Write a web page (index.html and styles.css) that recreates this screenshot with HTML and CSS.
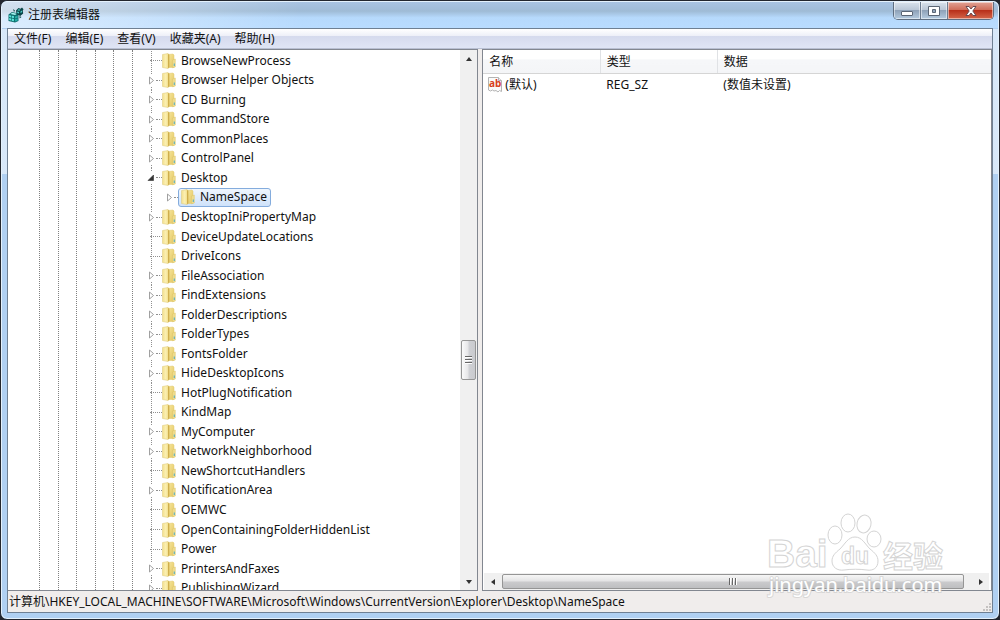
FILE: index.html
```html
<!DOCTYPE html>
<html lang="zh-CN">
<head>
    <meta charset="UTF-8">
    <meta name="viewport" content="width=device-width, initial-scale=1.0">
    <title>注册表编辑器</title>
    <link rel="stylesheet" href="styles.css">
</head>
<body>
    <svg class="symbols" aria-hidden="true">
        <defs>
            <linearGradient id="gold" x1="0" x2="1" y1="0" y2="0">
                <stop offset="0" stop-color="#f3df8c"/>
                <stop offset="0.5" stop-color="#fbf0b4"/>
                <stop offset="1" stop-color="#efd87c"/>
            </linearGradient>
            <linearGradient id="goldDark" x1="0" x2="1" y1="0" y2="1">
                <stop offset="0" stop-color="#f7e79c"/>
                <stop offset="1" stop-color="#e3c662"/>
            </linearGradient>
        </defs>
        <symbol id="folder" viewBox="0 0 14 16">
            <path d="M6 1.500 11 1l1 1v12.500H6z" fill="url(#goldDark)" stroke="#e0c970" stroke-width=".5"/>
            <path d="M.5 1.500 6 .5l1 1v13l-1 1-5.500-1z" fill="url(#gold)" stroke="#dcc878" stroke-width=".5"/>
            <path d="M6 .8 7.300 2v12.300L6 15.500z" fill="#cfae4c"/>
            <path d="M10.500 7 13.300 6v8l-2.800.8z" fill="#efdc8c" stroke="#dcc468" stroke-width=".5"/>
            <path d="M11.700 10.500h1.300v2.500h-1.300z" fill="#6fb5b8"/>
        </symbol>
        <symbol id="closed" viewBox="0 0 9 9">
            <path d="M2.500 1v7L6.500 4.500z" fill="#fff" stroke="#a0a0a0"/>
        </symbol>
        <symbol id="opened" viewBox="0 0 9 9">
            <path d="M6.500 2v5.500H1z" fill="#333" stroke="#333" stroke-width=".6"/>
        </symbol>
    </svg>

    <div class="window">
        <header class="titlebar">
            <svg class="app-icon" viewBox="0 0 16 16" aria-hidden="true">
                <path d="M.5 7.500 4 5l6.500 1.500V14L7 15.500.5 14z" fill="#0d6e6e"/>
                <path d="M1.200 8.200 3 8.500v2l-1.800-.4zM3.700 8.700l2.200.4v2L3.700 10.700zM1.200 11l1.800.4v2L1.200 13zM3.700 11.500l2.200.4v2.300l-2.200-.5z" fill="#5fe6dc"/>
                <path d="M7 9.500 9.700 8.800v2L7 11.500zM7 12.300l2.700-.8v2L7 14.500z" fill="#25aaa4"/>
                <path d="M2.500 7 4.200 5.700 9 6.700 7 8z" fill="#a8f5ef"/>
                <path d="M8 3.500 10.500 1l2 .8L14 .5l1.500 1.700-.8 1.600.5 2.700-3 2.500L8.500 7z" fill="#0b4548"/>
                <path d="M10.500 2.300l2 .5-1.200 1L9.500 3.400zM9.200 4.500l1.800.4V6.500L9.200 6zM12.500 4.500l1.500-.9v1.600L12.500 6z" fill="#4fcfc8"/>
                <path d="m5 2 2 1.500L6 5zM11.500 9l2 1-2 1.500z" fill="#104848"/>
            </svg>
            <h1 class="title">注册表编辑器</h1>
            <div class="controls">
                <button class="control" type="button" aria-label="最小化">
                    <svg viewBox="0 0 14 12"><rect x="1.500" y="6.500" width="11" height="4" rx=".5" fill="#fff" stroke="#5b6675"/></svg>
                </button>
                <button class="control" type="button" aria-label="最大化">
                    <svg viewBox="0 0 14 12"><path d="M1.500 1.500h11v9h-11zM5.500 4.500v3h3v-3z" fill="#fff" fill-rule="evenodd" stroke="#5b6675"/></svg>
                </button>
                <button class="control close" type="button" aria-label="关闭">
                    <svg viewBox="0 0 14 12"><path d="M2 1.500h3l2 2.500 2-2.500h3L8.800 6l3.200 4.500H9L7 8l-2 2.500H2L5.200 6z" fill="#fff" stroke="#6b4a50"/></svg>
                </button>
            </div>
        </header>

        <div class="client">
            <nav class="menubar">
                <button type="button">文件(F)</button>
                <button type="button">编辑(E)</button>
                <button type="button">查看(V)</button>
                <button type="button">收藏夹(A)</button>
                <button type="button">帮助(H)</button>
            </nav>

            <main class="panes">
                <section class="pane tree-pane">
                    <div class="guides"><i></i><i></i><i></i><i></i><i></i><i></i></div>
                    <ul class="tree">
                        <li class="node"><i class="stub"></i><svg class="folder"><use href="#folder"/></svg><span class="label">BrowseNewProcess</span></li>
                        <li class="node"><button class="twist" type="button" aria-label="展开"><svg><use href="#closed"/></svg></button><svg class="folder"><use href="#folder"/></svg><span class="label">Browser Helper Objects</span></li>
                        <li class="node"><button class="twist" type="button" aria-label="展开"><svg><use href="#closed"/></svg></button><svg class="folder"><use href="#folder"/></svg><span class="label">CD Burning</span></li>
                        <li class="node"><button class="twist" type="button" aria-label="展开"><svg><use href="#closed"/></svg></button><svg class="folder"><use href="#folder"/></svg><span class="label">CommandStore</span></li>
                        <li class="node"><button class="twist" type="button" aria-label="展开"><svg><use href="#closed"/></svg></button><svg class="folder"><use href="#folder"/></svg><span class="label">CommonPlaces</span></li>
                        <li class="node"><button class="twist" type="button" aria-label="展开"><svg><use href="#closed"/></svg></button><svg class="folder"><use href="#folder"/></svg><span class="label">ControlPanel</span></li>
                        <li class="node"><button class="twist" type="button" aria-label="折叠"><svg><use href="#opened"/></svg></button><svg class="folder"><use href="#folder"/></svg><span class="label">Desktop</span></li>
                        <li class="node child"><button class="twist" type="button" aria-label="展开"><svg><use href="#closed"/></svg></button><span class="selected"><svg class="folder"><use href="#folder"/></svg><span class="label">NameSpace</span></span></li>
                        <li class="node"><button class="twist" type="button" aria-label="展开"><svg><use href="#closed"/></svg></button><svg class="folder"><use href="#folder"/></svg><span class="label">DesktopIniPropertyMap</span></li>
                        <li class="node"><i class="stub"></i><svg class="folder"><use href="#folder"/></svg><span class="label">DeviceUpdateLocations</span></li>
                        <li class="node"><i class="stub"></i><svg class="folder"><use href="#folder"/></svg><span class="label">DriveIcons</span></li>
                        <li class="node"><button class="twist" type="button" aria-label="展开"><svg><use href="#closed"/></svg></button><svg class="folder"><use href="#folder"/></svg><span class="label">FileAssociation</span></li>
                        <li class="node"><button class="twist" type="button" aria-label="展开"><svg><use href="#closed"/></svg></button><svg class="folder"><use href="#folder"/></svg><span class="label">FindExtensions</span></li>
                        <li class="node"><button class="twist" type="button" aria-label="展开"><svg><use href="#closed"/></svg></button><svg class="folder"><use href="#folder"/></svg><span class="label">FolderDescriptions</span></li>
                        <li class="node"><button class="twist" type="button" aria-label="展开"><svg><use href="#closed"/></svg></button><svg class="folder"><use href="#folder"/></svg><span class="label">FolderTypes</span></li>
                        <li class="node"><button class="twist" type="button" aria-label="展开"><svg><use href="#closed"/></svg></button><svg class="folder"><use href="#folder"/></svg><span class="label">FontsFolder</span></li>
                        <li class="node"><button class="twist" type="button" aria-label="展开"><svg><use href="#closed"/></svg></button><svg class="folder"><use href="#folder"/></svg><span class="label">HideDesktopIcons</span></li>
                        <li class="node"><i class="stub"></i><svg class="folder"><use href="#folder"/></svg><span class="label">HotPlugNotification</span></li>
                        <li class="node"><i class="stub"></i><svg class="folder"><use href="#folder"/></svg><span class="label">KindMap</span></li>
                        <li class="node"><button class="twist" type="button" aria-label="展开"><svg><use href="#closed"/></svg></button><svg class="folder"><use href="#folder"/></svg><span class="label">MyComputer</span></li>
                        <li class="node"><button class="twist" type="button" aria-label="展开"><svg><use href="#closed"/></svg></button><svg class="folder"><use href="#folder"/></svg><span class="label">NetworkNeighborhood</span></li>
                        <li class="node"><i class="stub"></i><svg class="folder"><use href="#folder"/></svg><span class="label">NewShortcutHandlers</span></li>
                        <li class="node"><button class="twist" type="button" aria-label="展开"><svg><use href="#closed"/></svg></button><svg class="folder"><use href="#folder"/></svg><span class="label">NotificationArea</span></li>
                        <li class="node"><i class="stub"></i><svg class="folder"><use href="#folder"/></svg><span class="label">OEMWC</span></li>
                        <li class="node"><i class="stub"></i><svg class="folder"><use href="#folder"/></svg><span class="label">OpenContainingFolderHiddenList</span></li>
                        <li class="node"><i class="stub"></i><svg class="folder"><use href="#folder"/></svg><span class="label">Power</span></li>
                        <li class="node"><button class="twist" type="button" aria-label="展开"><svg><use href="#closed"/></svg></button><svg class="folder"><use href="#folder"/></svg><span class="label">PrintersAndFaxes</span></li>
                        <li class="node"><button class="twist" type="button" aria-label="展开"><svg><use href="#closed"/></svg></button><svg class="folder"><use href="#folder"/></svg><span class="label">PublishingWizard</span></li>
                    </ul>
                    <div class="vscroll">
                        <button type="button" aria-label="向上滚动"><svg viewBox="0 0 8 8"><path d="M1 6h6L4 2z"/></svg></button>
                        <div class="vtrack-above"></div>
                        <div class="vthumb"><i></i><i></i><i></i></div>
                        <div class="vtrack-below"></div>
                        <button type="button" aria-label="向下滚动"><svg viewBox="0 0 8 8"><path d="M1 2h6L4 6z"/></svg></button>
                    </div>
                </section>

                <section class="pane value-pane">
                    <table class="values">
                        <thead>
                            <tr><th class="col">名称</th><th class="col">类型</th><th>数据</th></tr>
                        </thead>
                        <tbody>
                            <tr>
                                <td class="name">
                                    <div class="entry">
                                        <svg class="string-icon" viewBox="0 0 16 16" aria-hidden="true">
                                            <path d="M1.500.5h10l3 3v11l-2-1-1.500 1.500-2-1.500-2 .5-1.500-1-2 1-2-1z" fill="#fafafa" stroke="#b4b4b4"/>
                                            <path d="M11.500.5v3h3" fill="#eee" stroke="#b4b4b4"/>
                                            <text x="2" y="10">ab</text>
                                        </svg>
                                        <span>(默认)</span>
                                    </div>
                                </td>
                                <td>REG_SZ</td>
                                <td>(数值未设置)</td>
                            </tr>
                        </tbody>
                    </table>
                    <div class="hscroll">
                        <button type="button" aria-label="向左滚动"><svg viewBox="0 0 8 8"><path d="M6 1v6L2 4z"/></svg></button>
                        <div class="hthumb"><i></i><i></i><i></i></div>
                        <button type="button" aria-label="向右滚动"><svg viewBox="0 0 8 8"><path d="M2 1v6l4-3z"/></svg></button>
                    </div>
                </section>
            </main>

            <footer class="statusbar">
                <span>计算机\HKEY_LOCAL_MACHINE\SOFTWARE\Microsoft\Windows\CurrentVersion\Explorer\Desktop\NameSpace</span>
                <svg class="grip" viewBox="0 0 10 10" aria-hidden="true">
                    <path d="M7 1h2v2H7zM4 4h2v2H4zM7 4h2v2H7zM1 7h2v2H1zM4 7h2v2H4zM7 7h2v2H7z"/>
                </svg>
            </footer>
        </div>
    </div>

    <svg class="watermark" viewBox="0 0 190 90">
        <g class="mark">
            <text class="bai" x="3" y="57">Bai</text>
            <ellipse cx="71" cy="25" rx="7" ry="9"/>
            <ellipse cx="84" cy="13" rx="7" ry="9"/>
            <ellipse cx="100" cy="14" rx="7" ry="9" transform="rotate(12 100 14)"/>
            <ellipse cx="110" cy="29" rx="7" ry="8"/>
            <path d="M91 27c7 0 10 7 15 12 5 4 8 7 8 12 0 7-5 10-11 9-8-1-15-1-23 0-7 1-12-3-12-9 0-5 3-8 8-12 5-5 8-12 15-12z"/>
            <text class="du" x="77" y="54">du</text>
            <text class="jingyan" x="119" y="57">经验</text>
        </g>
        <text class="site" x="5" y="82">jingyan.baidu.com</text>
    </svg>
</body>
</html>
```
FILE: styles.css
```css
* {
    margin: 0;
    padding: 0;
    box-sizing: border-box;
}

html, body {
    height: 100%;
    overflow: hidden;
}

body {
    background: #23262e;
    color: #111;
    font-family: "Noto Sans", "Noto Sans CJK SC", sans-serif;
    font-size: 12px;
    line-height: 16px;
}

button {
    border: none;
    background: none;
    color: inherit;
    font: inherit;
}

svg {
    display: block;
}

.symbols {
    position: absolute;
    width: 0;
    height: 0;
}

/* Window frame */
.window {
    height: 100%;
    display: flex;
    flex-direction: column;
    padding: 0 6px 6px;
    border: 1px solid #23262e;
    border-radius: 7px;
    background:
        linear-gradient(rgba(255, 255, 255, 0.5), rgba(255, 255, 255, 0.5)) 0 28px / 100% 145px no-repeat,
        #b0d0f2;
    box-shadow: inset 0 0 0 1px #e4f1fc;
}

.titlebar {
    display: flex;
    flex: none;
    align-items: center;
    height: 27px;
    margin: 0 -5px;
    padding: 0 4px 0 6px;
    border-radius: 6px 6px 0 0;
    border-top: 1px solid #e4f1fc;
    background:
        linear-gradient(90deg, rgba(255, 255, 255, 0.5), rgba(255, 255, 255, 0) 30%),
        linear-gradient(#a9c3e2, #9fbbd6 35%, #b6d9fc 60%, #b9dcff);
}

.app-icon {
    width: 16px;
    height: 16px;
    margin-right: 4px;
}

.title {
    font-size: 12px;
    font-weight: 400;
}

.controls {
    display: flex;
    align-self: flex-start;
    margin-left: auto;
    border: 1px solid #5f6e80;
    border-top: none;
    border-radius: 0 0 5px 5px;
    overflow: hidden;
}

.control {
    display: flex;
    align-items: center;
    justify-content: center;
    width: 27px;
    height: 17px;
    border-right: 1px solid #6d7d90;
    background: linear-gradient(#d9e2ec, #b9c6d5 48%, #8fa2b8 50%, #b4cbe0);
    box-shadow: inset 0 0 0 1px rgba(255, 255, 255, 0.5);
}

.control svg {
    width: 14px;
    height: 12px;
}

.control.close {
    width: 45px;
    border-right: none;
    background: linear-gradient(#e2a396, #cf6a56 48%, #b8301a 50%, #d4664a);
}

.client {
    flex: 1;
    min-height: 0;
    display: flex;
    flex-direction: column;
    border: 1px solid #6f8093;
    background: #f0edec;
}

/* Menu */
.menubar {
    display: flex;
    flex: none;
    height: 20px;
    padding: 0 0 0 6px;
    gap: 14px;
    border-bottom: 1px solid #b8bfd2;
    background: linear-gradient(#fff, #eef0f8 35%, #d5daed 38%, #dfe5f5);
}

/* Panes */
.panes {
    flex: 1;
    min-height: 0;
    display: flex;
    gap: 4px;
}

.pane {
    border: 1px solid #828790;
    background: #fff;
    overflow: hidden;
}

.tree-pane {
    display: flex;
    width: 47.8%;
    border-left: none;
}

.guides {
    display: grid;
    grid-template-columns: repeat(6, 1fr);
    flex: none;
    width: 142px;
    padding-left: 31px;
}

.guides i {
    border-left: 1px dotted #808080;
}

.tree {
    flex: 1;
    display: flex;
    flex-direction: column;
    height: calc(100% + 8px);
    padding-top: 1px;
    list-style: none;
}

.node {
    flex: 1;
    display: flex;
    align-items: center;
    background: repeating-linear-gradient(#909090 0 1px, #fff 1px 2px) 1px 0 / 1px 100% no-repeat;
}

.stub {
    width: 12px;
    border-top: 1px dotted #909090;
}

.twist {
    display: flex;
    align-items: center;
    width: 15px;
    margin-left: -3px;
}

.twist::after {
    content: "";
    flex: 1;
    border-top: 1px dotted #909090;
}

.twist svg {
    width: 9px;
    height: 11px;
    background: #fff;
}

.folder {
    width: 14px;
    height: 16px;
}

.label {
    margin-left: 5px;
    white-space: nowrap;
}

.child {
    padding-left: 18px;
}

.selected {
    display: flex;
    align-items: center;
    height: 19px;
    margin-left: -2px;
    padding: 0 3px 0 2px;
    border: 1px solid #84acdd;
    border-radius: 3px;
    background: linear-gradient(#eff6fe, #cfe2fa);
}

/* Scrollbars */
.vscroll {
    display: flex;
    flex-direction: column;
    width: 17px;
    background: #f0f0f0;
}

.vscroll button,
.hscroll button {
    display: flex;
    align-items: center;
    justify-content: center;
    flex: none;
    width: 17px;
    height: 17px;
}

.vscroll svg,
.hscroll svg {
    width: 8px;
    height: 8px;
    fill: #333;
}

.vtrack-above {
    flex: 272;
}

.vtrack-below {
    flex: 192;
}

.vthumb,
.hthumb {
    display: flex;
    align-items: center;
    justify-content: center;
    gap: 1px;
    border: 1px solid #959595;
    border-radius: 2px;
}

.vthumb {
    flex-direction: column;
    height: 40px;
    margin: 0 1px;
    background: linear-gradient(90deg, #fafafa, #e6e6e8 45%, #cfd0d4 55%, #c9cace);
}

.vthumb i {
    width: 7px;
    height: 2px;
    border-bottom: 1px solid #fff;
    background: #666;
}

.hscroll {
    display: flex;
    align-items: center;
    height: 17px;
    margin: 0 2px 0 1px;
    background: #f0f0f0;
}

.hthumb {
    flex: 1;
    height: 15px;
    margin: 0 8px 0 1px;
    background: linear-gradient(#f6f6f6, #e4e4e5 45%, #cacacc 55%, #bebfc1);
}

.hthumb i {
    width: 2px;
    height: 7px;
    border-right: 1px solid #fff;
    background: #666;
}

/* Values */
.value-pane {
    flex: 1;
    display: flex;
    flex-direction: column;
    justify-content: space-between;
}

.values {
    width: 100%;
    border-collapse: collapse;
    table-layout: fixed;
}

.values th {
    height: 23px;
    padding: 2px 6px 0;
    border-bottom: 1px solid #d5d5d5;
    background: linear-gradient(#fff 40%, #f6f7f9 42%, #f4f5f7);
    font-weight: 400;
    text-align: left;
}

.values .col {
    width: 117px;
    border-right: 1px solid #e0e2e5;
}

.values td {
    height: 23px;
    padding: 0 6px;
    white-space: nowrap;
}

.values .name {
    padding-left: 4px;
}

.entry {
    display: flex;
    align-items: center;
    gap: 2px;
}

.string-icon {
    width: 16px;
    height: 16px;
}

.string-icon text {
    font: bold 10px "Noto Sans", sans-serif;
    fill: #d8401c;
}

.statusbar {
    display: flex;
    flex: none;
    justify-content: space-between;
    align-items: center;
    height: 21px;
    padding-left: 1px;
    background: #f0edec;
}

.grip {
    align-self: flex-end;
    width: 10px;
    height: 10px;
    fill: #c4c1c0;
}

/* Watermark over the lower right corner */
.watermark {
    position: absolute;
    right: 46px;
    bottom: 20px;
    width: 190px;
    height: 90px;
    pointer-events: none;
}

.mark {
    fill: #fff;
    stroke: #d4d4d4;
    stroke-width: 1;
}

.bai {
    font: bold 39px "Liberation Sans", sans-serif;
}

.du {
    font: bold 23px "Liberation Sans", sans-serif;
}

.jingyan {
    font: bold 30px "Noto Sans CJK SC", sans-serif;
}

.site {
    font: 20px "Noto Sans", sans-serif;
    fill: #fff;
    stroke: #c8c8c8;
    stroke-width: 2;
    stroke-opacity: 0.6;
    paint-order: stroke;
}
```
